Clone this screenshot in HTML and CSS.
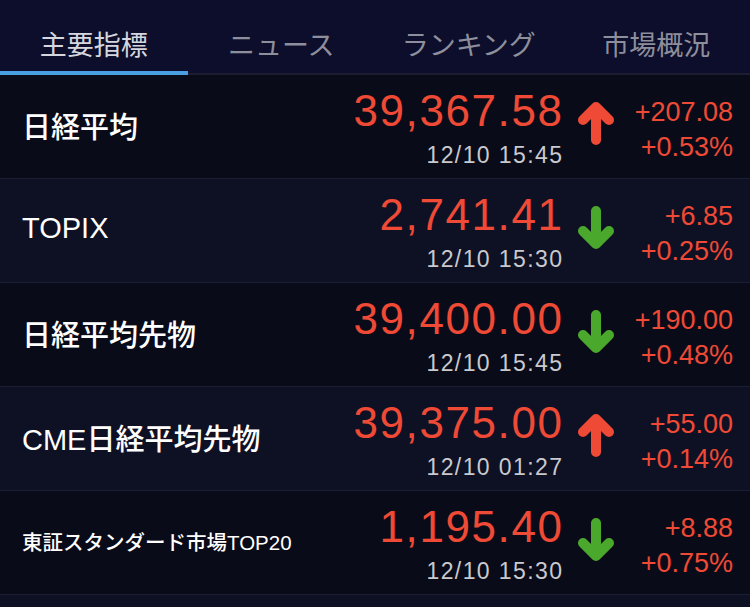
FILE: index.html
```html
<!DOCTYPE html>
<html lang="ja">
<head>
    <meta charset="UTF-8">
    <meta name="viewport" content="width=device-width, initial-scale=1.0">
    <title>マーケット</title>
    <link rel="stylesheet" href="styles.css">
</head>
<body>
    <div class="tabs">
        <div class="tab active">主要指標</div>
        <div class="tab">ニュース</div>
        <div class="tab">ランキング</div>
        <div class="tab">市場概況</div>
    </div>

    <div class="list">
        <div class="row">
            <div class="name">日経平均</div>
            <div class="value">
                <div class="price">39,367.58</div>
                <div class="time">12/10 15:45</div>
            </div>
            <svg class="arrow up" viewBox="0 0 38 43"><path d="M19 38V6M6 18L19 5L32 18"/></svg>
            <div class="change">
                <div>+207.08</div>
                <div>+0.53%</div>
            </div>
        </div>
        <div class="row">
            <div class="name">TOPIX</div>
            <div class="value">
                <div class="price">2,741.41</div>
                <div class="time">12/10 15:30</div>
            </div>
            <svg class="arrow down" viewBox="0 0 38 43"><path d="M19 5V37M6 25L19 38L32 25"/></svg>
            <div class="change">
                <div>+6.85</div>
                <div>+0.25%</div>
            </div>
        </div>
        <div class="row">
            <div class="name">日経平均先物</div>
            <div class="value">
                <div class="price">39,400.00</div>
                <div class="time">12/10 15:45</div>
            </div>
            <svg class="arrow down" viewBox="0 0 38 43"><path d="M19 5V37M6 25L19 38L32 25"/></svg>
            <div class="change">
                <div>+190.00</div>
                <div>+0.48%</div>
            </div>
        </div>
        <div class="row">
            <div class="name">CME日経平均先物</div>
            <div class="value">
                <div class="price">39,375.00</div>
                <div class="time">12/10 01:27</div>
            </div>
            <svg class="arrow up" viewBox="0 0 38 43"><path d="M19 38V6M6 18L19 5L32 18"/></svg>
            <div class="change">
                <div>+55.00</div>
                <div>+0.14%</div>
            </div>
        </div>
        <div class="row">
            <div class="name small">東証スタンダード市場TOP20</div>
            <div class="value">
                <div class="price">1,195.40</div>
                <div class="time">12/10 15:30</div>
            </div>
            <svg class="arrow down" viewBox="0 0 38 43"><path d="M19 5V37M6 25L19 38L32 25"/></svg>
            <div class="change">
                <div>+8.88</div>
                <div>+0.75%</div>
            </div>
        </div>
        <div class="row empty"></div>
    </div>
</body>
</html>
```

FILE: styles.css
```css
* {
    box-sizing: border-box;
    margin: 0;
    padding: 0;
}
body {
    background-color: #0e1024;
    font-family: "Liberation Sans", "Noto Sans CJK JP", sans-serif;
    color: #fff;
    overflow: hidden;
}

/* タブ */
.tabs {
    display: grid;
    grid-template-columns: repeat(4, 1fr);
    height: 75px;
    background-color: #0d0e2b;
    border-bottom: 2px solid #1c1d31;
}
.tab {
    position: relative;
    display: flex;
    justify-content: center;
    align-items: center;
    padding-top: 14px;
    font-family: "Noto Sans CJK JP", sans-serif;
    font-size: 27px;
    color: #8d8f9c;
}
.tab.active {
    color: #d6d7de;
}
.tab.active::after {
    content: "";
    position: absolute;
    left: 0;
    right: 0;
    bottom: -2px;
    height: 4px;
    background-color: #4a9fe2;
}

/* 指標リスト */
.row {
    display: flex;
    align-items: center;
    height: 104px;
    padding: 0 17px 0 22px;
    border-bottom: 1px solid #1b1d37;
    background-color: #0a0b18;
}
.row:nth-child(even) {
    background-color: #0e1024;
}
.row.empty {
    height: 12px;
    border-bottom: none;
}
.name {
    flex: 1;
    font-size: 29px;
    font-weight: 500;
    margin-bottom: 4px;
}
.name.small {
    font-size: 20.5px;
}
.value {
    text-align: right;
    padding-top: 3px;
}
.price {
    font-size: 44px;
    line-height: 44px;
    letter-spacing: 1.6px;
    margin-right: -1.6px;
    color: #ee4a36;
}
.time {
    margin-top: 11px;
    font-size: 23px;
    line-height: 23px;
    letter-spacing: 1.4px;
    margin-right: -1.4px;
    color: #c9c9ce;
}
.arrow {
    width: 38px;
    height: 43px;
    margin: 0 0 6px 15px;
    fill: none;
    stroke-width: 10;
    stroke-linecap: round;
    stroke-linejoin: round;
}
.arrow.up {
    stroke: #ee4a36;
}
.arrow.down {
    stroke: #4aa92c;
}
.change {
    width: 118px;
    padding-top: 6px;
    text-align: right;
    font-size: 27px;
    line-height: 35px;
    color: #ee4a36;
}
```
